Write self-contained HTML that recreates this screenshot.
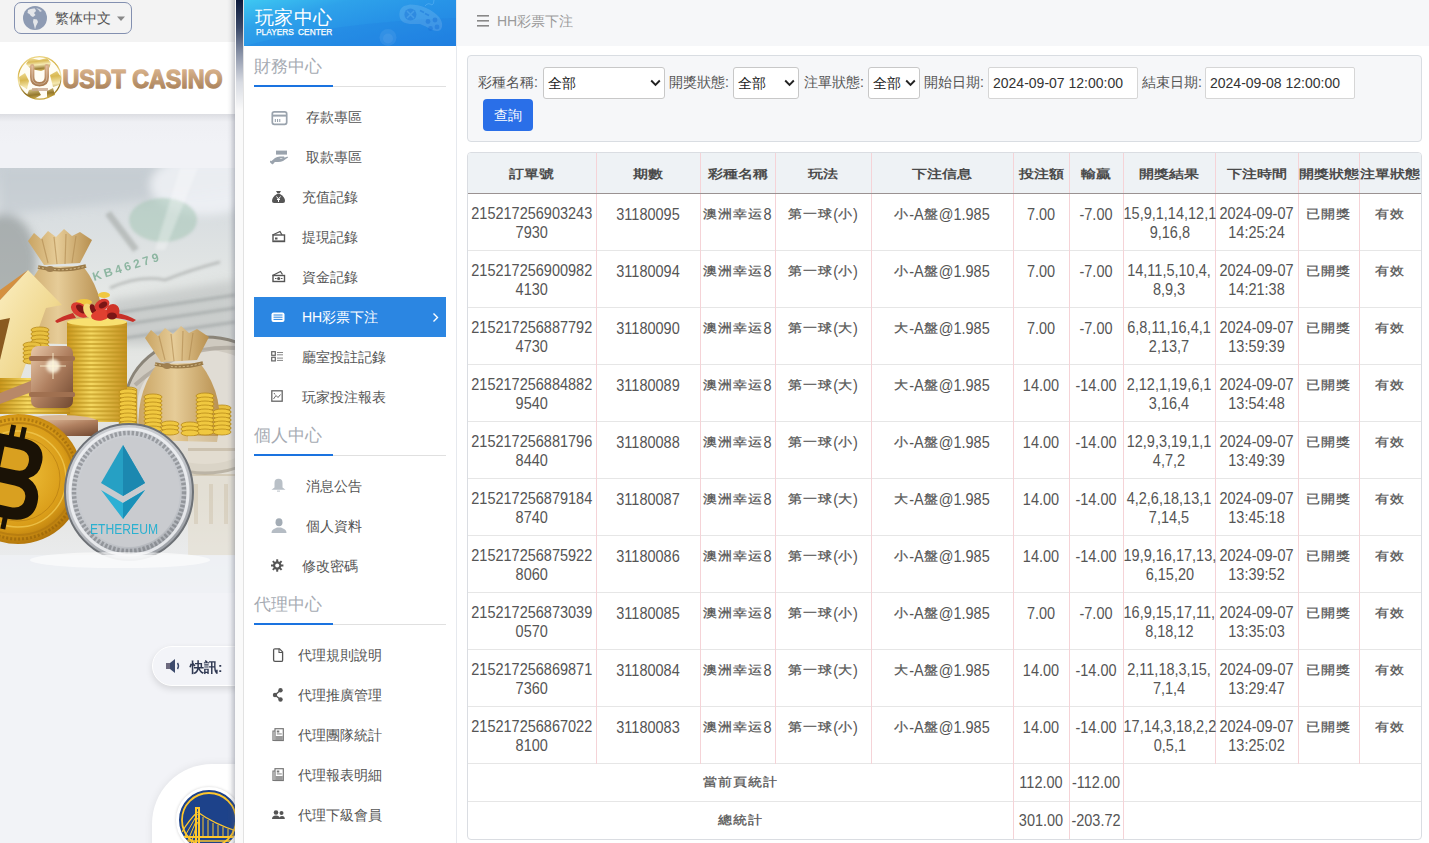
<!DOCTYPE html>
<html><head><meta charset="utf-8">
<style>
*{box-sizing:border-box;margin:0;padding:0}
html,body{width:1429px;height:843px;overflow:hidden;background:#fff;font-family:"Liberation Sans",sans-serif;color:#555}
.abs{position:absolute}
/* left page */
#lp{position:absolute;left:0;top:0;width:235px;height:843px;background:#f2f3f7;overflow:hidden}
#lp .topbar{position:absolute;left:0;top:0;width:235px;height:42px;background:#f3f3f3}
#lang{position:absolute;left:14px;top:2px;width:118px;height:32px;border:1px solid #8390b0;border-radius:7px}
#lp .hdr{position:absolute;left:0;top:42px;width:235px;height:72px;background:#fff}
#lp .gap{position:absolute;left:0;top:114px;width:235px;height:54px;background:linear-gradient(#dcdde2,#eff0f4 8px,#f1f2f6 30px)}
#lp .shadowR{position:absolute;right:0;top:0;width:8px;height:843px;background:linear-gradient(90deg,rgba(90,95,110,0),rgba(90,95,110,.06) 40%,rgba(90,95,110,.33))}
#strip{position:absolute;left:235px;top:0;width:9px;height:843px;background:#fafafa;border-right:1px solid #e2e2e2}
#strip .dk{position:absolute;left:1px;top:0;width:7px;height:110px;background:linear-gradient(#0c1a3c,#3a4868 25%,#8d96aa 50%,#d8dbe2 75%,rgba(250,250,250,0))}
/* sidebar */
#sb{position:absolute;left:244px;top:0;width:213px;height:843px;background:#fff;border-right:1px solid #e6e9ee}
#sbh{position:absolute;left:0;top:0;width:212px;height:46px;background:linear-gradient(165deg,#3ec8f2 0%,#2ea2ea 28%,#2793e7 55%,#1f80e1 100%);overflow:hidden}
#sbh .t1{position:absolute;left:11px;top:5px;font-size:18.5px;color:#fff;letter-spacing:0.3px}
#sbh .t2{position:absolute;left:12px;top:27px;font-size:8.6px;color:#fff;font-weight:normal;-webkit-text-stroke:.25px #fff;letter-spacing:0px;word-spacing:2px;transform:scaleX(.97);transform-origin:0 0;white-space:nowrap}
.sec{position:absolute;left:10px;width:192px;font-size:17px;color:#a6abb3}
.secl{position:absolute;left:10px;width:192px;height:1px;background:#e0e0e0}
.secl i{position:absolute;left:0;top:-1px;width:79px;height:2px;background:#1a73e0}
.it{position:absolute;left:10px;width:192px;height:40px;font-size:14px;color:#555}
.it .ic{position:absolute;left:17px;top:13px;width:16px;height:14px}
.it .tx{position:absolute;left:48px;top:12px;line-height:16px;white-space:nowrap}
.it.act{background:#2b86e2;color:#fff}
/* main */
#main{position:absolute;left:457px;top:0;width:972px;height:843px;background:#fff}
#topb{position:absolute;left:0;top:0;width:972px;height:46px;background:#f6f7f9}
#card{position:absolute;left:10px;top:55px;width:955px;height:87px;background:#f6f7f9;border:1px solid #d9dde2;border-radius:4px}
.lbl{position:absolute;top:18px;font-size:14px;color:#555;white-space:nowrap}
.sel{position:absolute;top:11px;height:32px;background:#fff;border:1px solid #c8c8c8;border-radius:3px;font-size:14px;color:#222}
.sel span{position:absolute;left:4px;top:7px}
.sel svg{position:absolute;top:11px}
.inp{position:absolute;top:11px;height:32px;background:#fff;border:1px solid #d6d6d6;border-radius:2px;font-size:14px;color:#333}
.inp span{position:absolute;left:4px;top:7px}
#btn{position:absolute;left:15px;top:43px;width:50px;height:32px;background:#2a6fe8;border-radius:4px;color:#fff;font-size:14px;text-align:center;line-height:32px}
#tbl{position:absolute;left:10px;top:152px;width:955px;height:688px;border:1px solid #dadde2;border-radius:4px;overflow:hidden}
table{border-collapse:collapse;table-layout:fixed;width:953px;font-size:14.5px;color:#555}
th{height:40px;background:#eef2f5;font-weight:bold;text-align:center;border-bottom:1px solid #9a9292;border-left:1px solid #f5d3d7;padding:0;font-size:14.5px;color:#4a4a4a}
td{height:57px;text-align:center;vertical-align:top;border-left:1px solid #f5d3d7;border-top:1px solid #e6e6e6;padding:11.5px 0 0 0;line-height:19px;white-space:nowrap}
.w{display:inline-block;transform:scaleY(1.1);transform-origin:50% 0;line-height:17px}
.cj{display:inline-block;font-size:14.5px;transform:translateY(-1px) scaleY(.78);-webkit-text-stroke:.3px #555}
th .cj{font-size:14.5px;transform:translateY(1.5px) scaleY(.8);-webkit-text-stroke:0}
th:first-child,td:first-child{border-left:none}
tr.sum td{height:38px;vertical-align:middle;padding:0}

#banner{position:absolute;left:0;top:168px;width:235px;height:425px;background:linear-gradient(#c9ced3,#dfe3e3 30%,#e7e8e4 60%,#eef0f3 90%,#f2f4f8)}
#notice{position:absolute;left:152px;top:646px;width:140px;height:40px;border-radius:20px;background:#f3f4f8;border:1px solid #fff;box-shadow:0 3px 7px rgba(0,0,0,.12)}
#roundw{position:absolute;left:152px;top:764px;width:160px;height:160px;border-radius:60px;background:#fff;box-shadow:0 0 8px rgba(0,0,0,.08)}
#gsw{position:absolute;left:24px;top:23px;width:66px;height:66px;border-radius:50%;background:#1d428a;border:3px solid #fff;box-shadow:0 0 3px rgba(0,0,0,.18);overflow:hidden}
</style></head>
<body>
<div id="lp">
  <div class="topbar"></div>
  <div id="lang"><svg class="abs" width="26" height="26" viewBox="0 0 26 26" style="left:8px;top:2px"><circle cx="12" cy="13" r="12" fill="#8e9bb3"/><path d="M5 5 Q8 3 12 3.5 L13 6 L11 8 L12.5 10 L10 12 L8 11 L6.5 9 L4.5 8 Z" fill="#f3f3f3" opacity=".85"/><path d="M13 3 Q17 3.5 19 6 L17 7 L15.5 5 Z" fill="#f3f3f3" opacity=".7"/><path d="M10.5 14 L14 14.5 L15 17 L13 21 L12 24.5 L11 20 L10 17 Z" fill="#f3f3f3" opacity=".85"/></svg><span class="abs" style="left:40px;top:7px;font-size:14px;color:#555">繁体中文</span><svg class="abs" width="10" height="6" viewBox="0 0 10 6" style="left:101px;top:13px"><path d="M1 0.5 L9 0.5 L5 5 Z" fill="#888"/></svg></div>
  <div class="hdr">
    <svg class="abs" width="46" height="46" viewBox="0 0 46 46" style="left:17px;top:13px">
      <defs><linearGradient id="gb" x1="0.2" y1="0" x2="0.4" y2="1"><stop offset="0" stop-color="#f0dc90"/><stop offset=".3" stop-color="#d4b040"/><stop offset=".55" stop-color="#f4e6a8"/><stop offset=".85" stop-color="#8a6a18"/><stop offset="1" stop-color="#c9a840"/></linearGradient>
      <linearGradient id="gu" x1="0" y1="0" x2="0" y2="1"><stop offset="0" stop-color="#d8ae88"/><stop offset="1" stop-color="#a87c52"/></linearGradient></defs>
      <circle cx="22.6" cy="22.9" r="21.3" fill="#fffdf4" stroke="url(#gb)" stroke-width="1.3"/>
      <path d="M13 3 L22 5 L30 3 L34 8 L32 13 L24 16 L14 14 L9 9 Z" fill="url(#gb)" opacity=".85"/>
      <path d="M2 22 L8 18 L12 26 L10 34 L3 30 Z M33 20 L40 16 L44 22 L42 30 L36 32 Z M12 35 L20 33 L24 40 L17 44 L10 40 Z M30 36 L36 33 L38 40 L30 43 Z" fill="url(#gb)" opacity=".9"/>
      <path d="M15.2 11.2 L15.2 22 Q15.2 29.2 22.5 29.2 Q29.8 29.2 29.8 22 L29.8 11.2" fill="none" stroke="url(#gu)" stroke-width="4.4" stroke-linecap="round"/>
      <path d="M15.2 11.2 L15.2 22 Q15.2 29.2 22.5 29.2 Q29.8 29.2 29.8 22 L29.8 11.2" fill="none" stroke="#f6e8dc" stroke-width=".6" opacity=".7" stroke-linecap="round"/>
      <rect x="15" y="33" width="16" height="3" fill="#c8a890" opacity=".8"/>
    </svg>
    <svg class="abs" width="170" height="34" viewBox="0 0 170 34" style="left:60px;top:21px"><defs><linearGradient id="gt" x1="0" y1="0" x2="0" y2="1"><stop offset="0.1" stop-color="#dcb690"/><stop offset="1" stop-color="#a27a52"/></linearGradient></defs><text x="2.5" y="24.8" font-family="Liberation Sans" font-weight="bold" font-size="25" textLength="160" lengthAdjust="spacingAndGlyphs" fill="url(#gt)" stroke="url(#gt)" stroke-width="1.3" stroke-linejoin="round">USDT CASINO</text></svg>
  </div>
  <div class="gap"></div>
  <div id="banner"><svg class="abs" width="235" height="425" viewBox="0 0 235 425" style="left:0;top:0">
<defs>
<filter id="bl4" x="-50%" y="-50%" width="200%" height="200%"><feGaussianBlur stdDeviation="5"/></filter><filter id="bl2" x="-50%" y="-50%" width="200%" height="200%"><feGaussianBlur stdDeviation="1.8"/></filter><filter id="bl1" x="-50%" y="-50%" width="200%" height="200%"><feGaussianBlur stdDeviation=".6"/></filter>
<linearGradient id="bgk" x1="0" y1="0" x2="0" y2="1"><stop offset="0" stop-color="#cad1d6"/><stop offset=".1" stop-color="#d8dde0"/><stop offset=".3" stop-color="#e5e8e6"/><stop offset=".75" stop-color="#e2e2de"/><stop offset="1" stop-color="#eef0f4"/></linearGradient>
<linearGradient id="bag" x1="0" y1="0" x2="1" y2="0"><stop offset="0" stop-color="#c9a463"/><stop offset=".45" stop-color="#e6cc98"/><stop offset="1" stop-color="#b89050"/></linearGradient>
<linearGradient id="gold" x1="0" y1="0" x2="1" y2="0"><stop offset="0" stop-color="#c9961c"/><stop offset=".4" stop-color="#f5d860"/><stop offset="1" stop-color="#c49020"/></linearGradient>
<linearGradient id="arr" x1="0" y1="0" x2="1" y2="1"><stop offset="0" stop-color="#fbeec0"/><stop offset=".6" stop-color="#f0d890"/><stop offset="1" stop-color="#d4a850"/></linearGradient>
<radialGradient id="btc" cx=".45" cy=".45" r=".6"><stop offset="0" stop-color="#f3c640"/><stop offset=".7" stop-color="#d99c18"/><stop offset="1" stop-color="#a86c08"/></radialGradient>
<radialGradient id="eth" cx=".45" cy=".4" r=".65"><stop offset="0" stop-color="#dcdee2"/><stop offset=".75" stop-color="#c2c5ca"/><stop offset="1" stop-color="#8a8e94"/></radialGradient>
<linearGradient id="bronze" x1="0" y1="0" x2="1" y2="1"><stop offset="0" stop-color="#e8c8a8"/><stop offset=".5" stop-color="#b08060"/><stop offset="1" stop-color="#704830"/></linearGradient>
</defs>
<rect width="235" height="425" fill="url(#bgk)"/>
<g filter="url(#bl4)">
<path d="M0 0 L235 0 L235 22 L0 47 Z" fill="#c3cad0" opacity=".7"/>
<ellipse cx="205" cy="17" rx="55" ry="30" fill="#eef1f5" opacity=".9"/>
<ellipse cx="5" cy="94" rx="32" ry="48" fill="#7f8787" opacity=".55"/>
<path d="M110 132 L235 112 L235 177 L120 177 Z" fill="#b4b8b8" opacity=".55"/>
</g>
<g filter="url(#bl2)">
<ellipse cx="163" cy="52" rx="34" ry="22" fill="#a0c4b2" opacity=".5"/>
<path d="M108 45 L136 82" stroke="#9ea3a0" stroke-width="7" opacity=".55"/>
<path d="M115 145 L235 127 M120 157 L235 140 M125 170 L235 154" stroke="#8f9494" stroke-width="2.5" opacity=".6"/>
<path d="M110 120 Q140 107 165 112 Q190 102 220 94" stroke="#8a8e8c" stroke-width="2" fill="none" opacity=".6"/>
</g>
<g filter="url(#bl1)"><text x="94" y="113" font-size="12" font-weight="bold" fill="#7fae96" opacity=".85" transform="rotate(-17 94 113)" font-family="Liberation Sans" letter-spacing="3">KB46279</text></g>
<path d="M180 0 L198 0 L165 82 L155 82 Z" fill="#fff" opacity=".3" filter="url(#bl2)"/>
<ellipse cx="205" cy="237" rx="80" ry="68" fill="#cfcac0" stroke="#8a8478" stroke-width="3"/>
<ellipse cx="205" cy="239" rx="68" ry="57" fill="#e0dcd4"/>
<path d="M135 217 Q180 177 235 180" stroke="#9c968a" stroke-width="4" fill="none" opacity=".55"/>
<!-- bag 1 -->
<path d="M28.0 73.0 L34.0 65.0 L41.0 71.0 L48.0 63.0 L56.0 69.0 L64.0 61.0 L72.0 68.0 L80.0 64.0 L92.0 72.0 L80.0 95.0 L44.0 97.0 Z" fill="url(#bag)"/>
<path d="M42.0 71.0 L48.0 95.0 M54.0 69.0 L57.0 96.0 M66.0 66.0 L65.0 96.0 M76.0 68.0 L72.0 95.0" stroke="#b08a50" stroke-width="1.2" opacity=".6"/>
<path d="M40.0 99.0 Q16.0 133.0 23.0 175.0 L100.0 177.0 Q110.0 133.0 83.0 98.0 Z" fill="url(#bag)"/>
<path d="M38.0 99.0 Q62.0 105.0 86.0 98.0" stroke="#9a7a48" stroke-width="3.5" fill="none"/>
<path d="M38.0 99.0 Q62.0 105.0 86.0 98.0" stroke="#d8c090" stroke-width="1" stroke-dasharray="2 2" fill="none"/>
<ellipse cx="50.0" cy="101.0" rx="4" ry="3" fill="#a08050"/>
<!-- arrow -->
<path d="M28 102 L62 137 L46 140 L20 212 L0 212 L0 132 Z" fill="url(#arr)"/>
<path d="M28 102 L0 132 L0 122 Z" fill="#d49040"/>
<path d="M0 152 L10 150 L0 192 Z" fill="#8a5a20"/>
<ellipse cx="40" cy="162.0" rx="9" ry="3" fill="#e8c040" stroke="#b88a18" stroke-width=".8"/><ellipse cx="40" cy="166.0" rx="9" ry="3" fill="#e8c040" stroke="#b88a18" stroke-width=".8"/><ellipse cx="40" cy="170.0" rx="9" ry="3" fill="#e8c040" stroke="#b88a18" stroke-width=".8"/><ellipse cx="40" cy="174.0" rx="9" ry="3" fill="#e8c040" stroke="#b88a18" stroke-width=".8"/><ellipse cx="40" cy="178.0" rx="9" ry="3" fill="#e8c040" stroke="#b88a18" stroke-width=".8"/><ellipse cx="40" cy="182.0" rx="9" ry="3" fill="#e8c040" stroke="#b88a18" stroke-width=".8"/><ellipse cx="40" cy="186.0" rx="9" ry="3" fill="#e8c040" stroke="#b88a18" stroke-width=".8"/><ellipse cx="40" cy="190.0" rx="9" ry="3" fill="#e8c040" stroke="#b88a18" stroke-width=".8"/><ellipse cx="32" cy="177.0" rx="9" ry="3" fill="#e8c040" stroke="#b88a18" stroke-width=".8"/><ellipse cx="32" cy="181.0" rx="9" ry="3" fill="#e8c040" stroke="#b88a18" stroke-width=".8"/><ellipse cx="32" cy="185.0" rx="9" ry="3" fill="#e8c040" stroke="#b88a18" stroke-width=".8"/><ellipse cx="32" cy="189.0" rx="9" ry="3" fill="#e8c040" stroke="#b88a18" stroke-width=".8"/><ellipse cx="32" cy="193.0" rx="9" ry="3" fill="#e8c040" stroke="#b88a18" stroke-width=".8"/><ellipse cx="128" cy="222.0" rx="9" ry="3" fill="#e8c040" stroke="#b88a18" stroke-width=".8"/><ellipse cx="128" cy="226.0" rx="9" ry="3" fill="#e8c040" stroke="#b88a18" stroke-width=".8"/><ellipse cx="128" cy="230.0" rx="9" ry="3" fill="#e8c040" stroke="#b88a18" stroke-width=".8"/><ellipse cx="128" cy="234.0" rx="9" ry="3" fill="#e8c040" stroke="#b88a18" stroke-width=".8"/><ellipse cx="128" cy="238.0" rx="9" ry="3" fill="#e8c040" stroke="#b88a18" stroke-width=".8"/><ellipse cx="128" cy="242.0" rx="9" ry="3" fill="#e8c040" stroke="#b88a18" stroke-width=".8"/><ellipse cx="128" cy="246.0" rx="9" ry="3" fill="#e8c040" stroke="#b88a18" stroke-width=".8"/><ellipse cx="128" cy="250.0" rx="9" ry="3" fill="#e8c040" stroke="#b88a18" stroke-width=".8"/><ellipse cx="128" cy="254.0" rx="9" ry="3" fill="#e8c040" stroke="#b88a18" stroke-width=".8"/><ellipse cx="128" cy="258.0" rx="9" ry="3" fill="#e8c040" stroke="#b88a18" stroke-width=".8"/><ellipse cx="150" cy="242.0" rx="9" ry="3" fill="#e8c040" stroke="#b88a18" stroke-width=".8"/><ellipse cx="150" cy="246.0" rx="9" ry="3" fill="#e8c040" stroke="#b88a18" stroke-width=".8"/><ellipse cx="150" cy="250.0" rx="9" ry="3" fill="#e8c040" stroke="#b88a18" stroke-width=".8"/><ellipse cx="150" cy="254.0" rx="9" ry="3" fill="#e8c040" stroke="#b88a18" stroke-width=".8"/><ellipse cx="150" cy="258.0" rx="9" ry="3" fill="#e8c040" stroke="#b88a18" stroke-width=".8"/><ellipse cx="170" cy="230.0" rx="9" ry="3" fill="#e8c040" stroke="#b88a18" stroke-width=".8"/><ellipse cx="170" cy="234.0" rx="9" ry="3" fill="#e8c040" stroke="#b88a18" stroke-width=".8"/><ellipse cx="170" cy="238.0" rx="9" ry="3" fill="#e8c040" stroke="#b88a18" stroke-width=".8"/><ellipse cx="170" cy="242.0" rx="9" ry="3" fill="#e8c040" stroke="#b88a18" stroke-width=".8"/><ellipse cx="170" cy="246.0" rx="9" ry="3" fill="#e8c040" stroke="#b88a18" stroke-width=".8"/><ellipse cx="170" cy="250.0" rx="9" ry="3" fill="#e8c040" stroke="#b88a18" stroke-width=".8"/><ellipse cx="170" cy="254.0" rx="9" ry="3" fill="#e8c040" stroke="#b88a18" stroke-width=".8"/><ellipse cx="170" cy="258.0" rx="9" ry="3" fill="#e8c040" stroke="#b88a18" stroke-width=".8"/><ellipse cx="170" cy="262.0" rx="9" ry="3" fill="#e8c040" stroke="#b88a18" stroke-width=".8"/><ellipse cx="185" cy="247.0" rx="9" ry="3" fill="#e8c040" stroke="#b88a18" stroke-width=".8"/><ellipse cx="185" cy="251.0" rx="9" ry="3" fill="#e8c040" stroke="#b88a18" stroke-width=".8"/><ellipse cx="185" cy="255.0" rx="9" ry="3" fill="#e8c040" stroke="#b88a18" stroke-width=".8"/><ellipse cx="185" cy="259.0" rx="9" ry="3" fill="#e8c040" stroke="#b88a18" stroke-width=".8"/><ellipse cx="185" cy="263.0" rx="9" ry="3" fill="#e8c040" stroke="#b88a18" stroke-width=".8"/><ellipse cx="205" cy="224.0" rx="9" ry="3" fill="#e8c040" stroke="#b88a18" stroke-width=".8"/><ellipse cx="205" cy="228.0" rx="9" ry="3" fill="#e8c040" stroke="#b88a18" stroke-width=".8"/><ellipse cx="205" cy="232.0" rx="9" ry="3" fill="#e8c040" stroke="#b88a18" stroke-width=".8"/><ellipse cx="205" cy="236.0" rx="9" ry="3" fill="#e8c040" stroke="#b88a18" stroke-width=".8"/><ellipse cx="205" cy="240.0" rx="9" ry="3" fill="#e8c040" stroke="#b88a18" stroke-width=".8"/><ellipse cx="205" cy="244.0" rx="9" ry="3" fill="#e8c040" stroke="#b88a18" stroke-width=".8"/><ellipse cx="205" cy="248.0" rx="9" ry="3" fill="#e8c040" stroke="#b88a18" stroke-width=".8"/><ellipse cx="205" cy="252.0" rx="9" ry="3" fill="#e8c040" stroke="#b88a18" stroke-width=".8"/><ellipse cx="205" cy="256.0" rx="9" ry="3" fill="#e8c040" stroke="#b88a18" stroke-width=".8"/><ellipse cx="205" cy="260.0" rx="9" ry="3" fill="#e8c040" stroke="#b88a18" stroke-width=".8"/><ellipse cx="222" cy="240.0" rx="9" ry="3" fill="#e8c040" stroke="#b88a18" stroke-width=".8"/><ellipse cx="222" cy="244.0" rx="9" ry="3" fill="#e8c040" stroke="#b88a18" stroke-width=".8"/><ellipse cx="222" cy="248.0" rx="9" ry="3" fill="#e8c040" stroke="#b88a18" stroke-width=".8"/><ellipse cx="222" cy="252.0" rx="9" ry="3" fill="#e8c040" stroke="#b88a18" stroke-width=".8"/><ellipse cx="222" cy="256.0" rx="9" ry="3" fill="#e8c040" stroke="#b88a18" stroke-width=".8"/><ellipse cx="222" cy="260.0" rx="9" ry="3" fill="#e8c040" stroke="#b88a18" stroke-width=".8"/>
<!-- coin stack -->
<rect x="67" y="154" width="60" height="100" fill="url(#gold)"/>
<rect x="67" y="154.0" width="60" height="2" fill="#b8901c" opacity=".55"/><rect x="67" y="158.2" width="60" height="2" fill="#b8901c" opacity=".55"/><rect x="67" y="162.4" width="60" height="2" fill="#b8901c" opacity=".55"/><rect x="67" y="166.6" width="60" height="2" fill="#b8901c" opacity=".55"/><rect x="67" y="170.8" width="60" height="2" fill="#b8901c" opacity=".55"/><rect x="67" y="175.0" width="60" height="2" fill="#b8901c" opacity=".55"/><rect x="67" y="179.2" width="60" height="2" fill="#b8901c" opacity=".55"/><rect x="67" y="183.4" width="60" height="2" fill="#b8901c" opacity=".55"/><rect x="67" y="187.6" width="60" height="2" fill="#b8901c" opacity=".55"/><rect x="67" y="191.8" width="60" height="2" fill="#b8901c" opacity=".55"/><rect x="67" y="196.0" width="60" height="2" fill="#b8901c" opacity=".55"/><rect x="67" y="200.2" width="60" height="2" fill="#b8901c" opacity=".55"/><rect x="67" y="204.4" width="60" height="2" fill="#b8901c" opacity=".55"/><rect x="67" y="208.6" width="60" height="2" fill="#b8901c" opacity=".55"/><rect x="67" y="212.8" width="60" height="2" fill="#b8901c" opacity=".55"/><rect x="67" y="217.0" width="60" height="2" fill="#b8901c" opacity=".55"/><rect x="67" y="221.2" width="60" height="2" fill="#b8901c" opacity=".55"/><rect x="67" y="225.4" width="60" height="2" fill="#b8901c" opacity=".55"/><rect x="67" y="229.6" width="60" height="2" fill="#b8901c" opacity=".55"/><rect x="67" y="233.8" width="60" height="2" fill="#b8901c" opacity=".55"/><rect x="67" y="238.0" width="60" height="2" fill="#b8901c" opacity=".55"/><rect x="67" y="242.2" width="60" height="2" fill="#b8901c" opacity=".55"/><rect x="67" y="246.4" width="60" height="2" fill="#b8901c" opacity=".55"/><rect x="67" y="250.6" width="60" height="2" fill="#b8901c" opacity=".55"/>
<ellipse cx="97" cy="154" rx="30" ry="4" fill="#f8e070"/>
<!-- bow -->
<ellipse cx="84" cy="134" rx="8" ry="3" fill="#f0c840"/>
<ellipse cx="104" cy="127" rx="6" ry="3" fill="#f0c840"/>
<path d="M55 153 Q62 148 73 145 L76 150 Q66 151 57 155 Z" fill="#c83028"/>
<path d="M117 145 Q128 147 136 152 L133 154 Q126 151 115 150 Z" fill="#c83028"/>
<ellipse cx="80" cy="142" rx="10" ry="6.5" transform="rotate(35 80 142)" fill="#d83a30"/>
<ellipse cx="81" cy="141" rx="6" ry="3.2" transform="rotate(40 81 141)" fill="#7a1616"/>
<ellipse cx="89" cy="143" rx="8" ry="5" transform="rotate(60 89 143)" fill="#f3d878"/>
<ellipse cx="93" cy="141" rx="5" ry="2.8" transform="rotate(70 93 141)" fill="#7a1616"/>
<ellipse cx="102" cy="137" rx="8" ry="5.5" transform="rotate(-30 102 137)" fill="#d83a30"/>
<ellipse cx="103" cy="137" rx="4.5" ry="2.8" transform="rotate(-30 103 137)" fill="#7a1616"/>
<ellipse cx="101" cy="147" rx="10" ry="5.5" transform="rotate(-10 101 147)" fill="#e04030"/>
<ellipse cx="113" cy="143" rx="6.5" ry="7" fill="#d03428"/>
<ellipse cx="112" cy="148" rx="5" ry="3.5" fill="#7a1616"/>
<!-- gavel -->
<rect x="0" y="210" width="70" height="36" fill="url(#gold)"/><rect x="0" y="212.0" width="70" height="1.6" fill="#b08a18" opacity=".5"/><rect x="0" y="216.0" width="70" height="1.6" fill="#b08a18" opacity=".5"/><rect x="0" y="220.0" width="70" height="1.6" fill="#b08a18" opacity=".5"/><rect x="0" y="224.0" width="70" height="1.6" fill="#b08a18" opacity=".5"/><rect x="0" y="228.0" width="70" height="1.6" fill="#b08a18" opacity=".5"/><rect x="0" y="232.0" width="70" height="1.6" fill="#b08a18" opacity=".5"/><rect x="0" y="236.0" width="70" height="1.6" fill="#b08a18" opacity=".5"/><rect x="0" y="240.0" width="70" height="1.6" fill="#b08a18" opacity=".5"/><rect x="0" y="244.0" width="70" height="1.6" fill="#b08a18" opacity=".5"/>
<ellipse cx="60" cy="254" rx="38" ry="7" fill="#d8b898"/>
<rect x="22" y="252" width="76" height="16" fill="url(#bronze)"/>
<path d="M0 225 L38 210 L42 220 L0 236 Z" fill="#b88868"/>
<rect x="31" y="178" width="42" height="62" rx="7" fill="url(#bronze)"/>
<rect x="29" y="188" width="46" height="5" rx="2" fill="#a07050"/>
<rect x="29" y="224" width="46" height="5" rx="2" fill="#a07050"/>
<circle cx="53" cy="198" r="7" fill="#fffbe8" opacity=".85" filter="url(#bl2)"/>
<path d="M40 198 L66 198 M53 185 L53 211" stroke="#fff8d8" stroke-width="1" opacity=".8"/>
<!-- bag 2 -->
<path d="M145.0 170.0 L151.0 162.0 L158.0 168.0 L165.0 160.0 L173.0 166.0 L181.0 158.0 L189.0 165.0 L197.0 161.0 L209.0 169.0 L197.0 192.0 L161.0 194.0 Z" fill="url(#bag)"/>
<path d="M159.0 168.0 L165.0 192.0 M171.0 166.0 L174.0 193.0 M183.0 163.0 L182.0 193.0 M193.0 165.0 L189.0 192.0" stroke="#b08a50" stroke-width="1.2" opacity=".6"/>
<path d="M157.0 196.0 Q133.0 230.0 140.0 272.0 L217.0 274.0 Q227.0 230.0 200.0 195.0 Z" fill="url(#bag)"/>
<path d="M155.0 196.0 Q179.0 202.0 203.0 195.0" stroke="#9a7a48" stroke-width="3.5" fill="none"/>
<path d="M155.0 196.0 Q179.0 202.0 203.0 195.0" stroke="#d8c090" stroke-width="1" stroke-dasharray="2 2" fill="none"/>
<ellipse cx="167.0" cy="198.0" rx="4" ry="3" fill="#a08050"/>
<ellipse cx="128" cy="224.0" rx="9" ry="3" fill="#f0c840" stroke="#b88a18" stroke-width=".8"/><ellipse cx="128" cy="228.0" rx="9" ry="3" fill="#f0c840" stroke="#b88a18" stroke-width=".8"/><ellipse cx="128" cy="232.0" rx="9" ry="3" fill="#f0c840" stroke="#b88a18" stroke-width=".8"/><ellipse cx="128" cy="236.0" rx="9" ry="3" fill="#f0c840" stroke="#b88a18" stroke-width=".8"/><ellipse cx="128" cy="240.0" rx="9" ry="3" fill="#f0c840" stroke="#b88a18" stroke-width=".8"/><ellipse cx="128" cy="244.0" rx="9" ry="3" fill="#f0c840" stroke="#b88a18" stroke-width=".8"/><ellipse cx="128" cy="248.0" rx="9" ry="3" fill="#f0c840" stroke="#b88a18" stroke-width=".8"/><ellipse cx="128" cy="252.0" rx="9" ry="3" fill="#f0c840" stroke="#b88a18" stroke-width=".8"/><ellipse cx="128" cy="256.0" rx="9" ry="3" fill="#f0c840" stroke="#b88a18" stroke-width=".8"/><ellipse cx="128" cy="260.0" rx="9" ry="3" fill="#f0c840" stroke="#b88a18" stroke-width=".8"/><ellipse cx="153" cy="229.0" rx="9" ry="3" fill="#f0c840" stroke="#b88a18" stroke-width=".8"/><ellipse cx="153" cy="233.0" rx="9" ry="3" fill="#f0c840" stroke="#b88a18" stroke-width=".8"/><ellipse cx="153" cy="237.0" rx="9" ry="3" fill="#f0c840" stroke="#b88a18" stroke-width=".8"/><ellipse cx="153" cy="241.0" rx="9" ry="3" fill="#f0c840" stroke="#b88a18" stroke-width=".8"/><ellipse cx="153" cy="245.0" rx="9" ry="3" fill="#f0c840" stroke="#b88a18" stroke-width=".8"/><ellipse cx="153" cy="249.0" rx="9" ry="3" fill="#f0c840" stroke="#b88a18" stroke-width=".8"/><ellipse cx="153" cy="253.0" rx="9" ry="3" fill="#f0c840" stroke="#b88a18" stroke-width=".8"/><ellipse cx="153" cy="257.0" rx="9" ry="3" fill="#f0c840" stroke="#b88a18" stroke-width=".8"/><ellipse cx="153" cy="261.0" rx="9" ry="3" fill="#f0c840" stroke="#b88a18" stroke-width=".8"/><ellipse cx="170" cy="256.0" rx="9" ry="3" fill="#f0c840" stroke="#b88a18" stroke-width=".8"/><ellipse cx="170" cy="260.0" rx="9" ry="3" fill="#f0c840" stroke="#b88a18" stroke-width=".8"/><ellipse cx="170" cy="264.0" rx="9" ry="3" fill="#f0c840" stroke="#b88a18" stroke-width=".8"/><ellipse cx="205" cy="228.0" rx="9" ry="3" fill="#f0c840" stroke="#b88a18" stroke-width=".8"/><ellipse cx="205" cy="232.0" rx="9" ry="3" fill="#f0c840" stroke="#b88a18" stroke-width=".8"/><ellipse cx="205" cy="236.0" rx="9" ry="3" fill="#f0c840" stroke="#b88a18" stroke-width=".8"/><ellipse cx="205" cy="240.0" rx="9" ry="3" fill="#f0c840" stroke="#b88a18" stroke-width=".8"/><ellipse cx="205" cy="244.0" rx="9" ry="3" fill="#f0c840" stroke="#b88a18" stroke-width=".8"/><ellipse cx="205" cy="248.0" rx="9" ry="3" fill="#f0c840" stroke="#b88a18" stroke-width=".8"/><ellipse cx="205" cy="252.0" rx="9" ry="3" fill="#f0c840" stroke="#b88a18" stroke-width=".8"/><ellipse cx="205" cy="256.0" rx="9" ry="3" fill="#f0c840" stroke="#b88a18" stroke-width=".8"/><ellipse cx="205" cy="260.0" rx="9" ry="3" fill="#f0c840" stroke="#b88a18" stroke-width=".8"/><ellipse cx="205" cy="264.0" rx="9" ry="3" fill="#f0c840" stroke="#b88a18" stroke-width=".8"/><ellipse cx="222" cy="244.0" rx="9" ry="3" fill="#f0c840" stroke="#b88a18" stroke-width=".8"/><ellipse cx="222" cy="248.0" rx="9" ry="3" fill="#f0c840" stroke="#b88a18" stroke-width=".8"/><ellipse cx="222" cy="252.0" rx="9" ry="3" fill="#f0c840" stroke="#b88a18" stroke-width=".8"/><ellipse cx="222" cy="256.0" rx="9" ry="3" fill="#f0c840" stroke="#b88a18" stroke-width=".8"/><ellipse cx="222" cy="260.0" rx="9" ry="3" fill="#f0c840" stroke="#b88a18" stroke-width=".8"/><ellipse cx="222" cy="264.0" rx="9" ry="3" fill="#f0c840" stroke="#b88a18" stroke-width=".8"/><ellipse cx="190" cy="257.0" rx="9" ry="3" fill="#f0c840" stroke="#b88a18" stroke-width=".8"/><ellipse cx="190" cy="261.0" rx="9" ry="3" fill="#f0c840" stroke="#b88a18" stroke-width=".8"/><ellipse cx="190" cy="265.0" rx="9" ry="3" fill="#f0c840" stroke="#b88a18" stroke-width=".8"/>
<g opacity=".55"><rect x="188" y="268" width="47" height="120" fill="#e4dccd"/><rect x="188" y="280" width="47" height="3" fill="#bcae92"/><rect x="188" y="306" width="47" height="2" fill="#c8b898"/><rect x="194" y="316" width="4" height="40" fill="#cfc2a6"/><rect x="209" y="316" width="4" height="40" fill="#cfc2a6"/><rect x="224" y="316" width="4" height="40" fill="#cfc2a6"/></g>
<!-- bitcoin -->
<circle cx="18" cy="311" r="65" fill="url(#btc)"/>
<circle cx="18" cy="311" r="56" fill="none" stroke="#b07810" stroke-width="2" opacity=".7"/>
<circle cx="18" cy="311" r="48" fill="none" stroke="#f0c850" stroke-width="1.5" opacity=".8"/><circle cx="18" cy="311" r="60" fill="none" stroke="#8a5a08" stroke-width="3" stroke-dasharray="2 2" opacity=".5"/><circle cx="18" cy="311" r="42" fill="none" stroke="#b07810" stroke-width="1" opacity=".6"/>
<g transform="rotate(12 18 311)"><path d="M-16 270 L14 270 Q38 270 38 290 Q38 304 28 308 Q42 314 42 330 Q42 352 16 352 L-16 352 Z" fill="#1a1206"/>
<path d="M-2 282 L14 282 Q25 282 25 293 Q25 303 14 303 L-2 303 Z M-2 318 L16 318 Q29 318 29 329 Q29 340 16 340 L-2 340 Z" fill="#d9a020"/>
<rect x="0" y="259" width="5" height="13" fill="#1a1206"/><rect x="11" y="259" width="5" height="13" fill="#1a1206"/>
<rect x="0" y="350" width="5" height="13" fill="#1a1206"/><rect x="11" y="350" width="5" height="13" fill="#1a1206"/></g>
<!-- eth -->
<ellipse cx="129" cy="324" rx="64" ry="68" fill="url(#eth)"/>
<ellipse cx="129" cy="324" rx="64" ry="68" fill="none" stroke="#6d7176" stroke-width="2"/>
<ellipse cx="129" cy="324" rx="59" ry="63" fill="none" stroke="#f4f5f7" stroke-width="3" opacity=".8"/><ellipse cx="129" cy="324" rx="55" ry="59" fill="none" stroke="#6f7378" stroke-width="4.5" stroke-dasharray="2.5 1.8" opacity=".55"/>
<ellipse cx="129" cy="324" rx="51" ry="55" fill="#c9cbcf"/>
<path d="M123 277 L145 315 L123 328 L101 315 Z" fill="#26a0c4"/>
<path d="M123 277 L145 315 L123 328 Z" fill="#1c88b0"/>
<path d="M101 322 L123 335 L145 322 L123 351 Z" fill="#2cb0d4"/>
<path d="M123 335 L145 322 L123 351 Z" fill="#1a90b8"/>
<text x="124" y="366" text-anchor="middle" font-size="14" fill="#2ab0d0" font-family="Liberation Sans" textLength="68" lengthAdjust="spacingAndGlyphs">ETHEREUM</text>
<!-- bottom reflection -->
<rect x="0" y="387" width="235" height="40" fill="#eff1f5" opacity=".85"/>
<ellipse cx="120" cy="392" rx="90" ry="8" fill="#fff" opacity=".6"/>
</svg></div>
  <div id="notice"><svg class="abs" width="18" height="16" viewBox="0 0 18 16" style="left:12px;top:11px"><path d="M1 5 L5 5 L10 1 L10 15 L5 11 L1 11 Z" fill="#3c4a6c"/><rect x="1" y="5" width="4" height="6" fill="#6d6a7e"/><path d="M12.5 5 Q14.5 8 12.5 11" fill="none" stroke="#3c4a6c" stroke-width="1.4"/></svg><span class="abs" style="left:37px;top:11.5px;font-size:13.5px;font-weight:bold;color:#2f3852">快訊:</span></div>
  <div id="roundw"><div id="gsw"><svg class="abs" width="60" height="60" viewBox="0 0 60 60" style="left:0;top:0"><circle cx="30" cy="30" r="27" fill="none" stroke="#ffc72c" stroke-width="1.8"/><g stroke="#ffc72c" fill="none"><path d="M17 18 L17 60 M20 18 L20 60" stroke-width="2"/><path d="M16 18 L21 18" stroke-width="2"/><path d="M18.5 22 Q10 30 3 42" stroke-width="1.2"/><path d="M18.5 24 L6 46 M18.5 28 L9 50 M18.5 32 L12 54" stroke-width="1"/><path d="M18.5 22 Q35 34 60 42" stroke-width="1.2"/><path d="M24 27 L24 46 M29 30 L29 46 M34 33 L34 46 M39 35 L39 46 M44 37 L44 46 M49 39 L49 46 M54 40 L54 46" stroke-width="1"/><path d="M2 47 L60 47" stroke-width="2.2"/><path d="M2 51 L60 51" stroke-width="1.5"/></g></svg></div></div>
  <div class="shadowR"></div>
</div>
<div id="strip"><div class="dk"></div></div>
<div id="sb">
  <div id="sbh"><svg class="abs" width="212" height="46" viewBox="0 0 212 46" style="left:0;top:0"><path d="M0 46 Q90 22 212 18 L212 46 Z" fill="#1f7ae0" opacity=".25"/><path d="M166 4.5 C176 4.5 188 9 195 17 C200 23 199 31 193 31 C188 31 184 27 176 24 C170 23.5 164 25 159 22 C154 19 154 9 160 6 Z" fill="#ffffff" opacity=".13"/><circle cx="166.4" cy="14.5" r="6" fill="#1670d8" opacity=".45"/><path d="M163 11 L170 18 M170 11 L163 18" stroke="#5ab0f0" stroke-width="1.5" opacity=".5"/><g fill="#1670d8" opacity=".45"><circle cx="184" cy="21.5" r="2.4"/><circle cx="191" cy="20" r="2.4"/><circle cx="186.5" cy="28.5" r="2.4"/><circle cx="193" cy="27" r="2.4"/></g><path d="M176 10.5 L180 12.5 M181 13.5 L185 15.5" stroke="#1670d8" stroke-width="1.8" opacity=".45"/><path d="M181 6 Q184 2 188 5 Q190 4 190 0" stroke="#8fd0ff" stroke-width="1" fill="none" opacity=".3"/><circle cx="144" cy="37.5" r="8.5" fill="#ffffff" opacity=".07"/><circle cx="144" cy="38.5" r="5" fill="#ffffff" opacity=".06"/></svg><div class="t1">玩家中心</div><div class="t2">PLAYERS CENTER</div></div>
<div class="sec" style="top:55px">財務中心</div><div class="secl" style="top:86px"><i></i></div>
<div class="sec" style="top:424px">個人中心</div><div class="secl" style="top:455px"><i></i></div>
<div class="sec" style="top:593px">代理中心</div><div class="secl" style="top:624px"><i></i></div>
<div class="it " style="top:97px"><svg class="abs" width="18" height="16" viewBox="0 0 18 16" style="left:17px;top:13px"><rect x="1.3" y="1.9" width="14.4" height="12.4" rx="2" fill="none" stroke="#9aa3ad" stroke-width="1.7"/><rect x="1" y="4.6" width="15" height="2" fill="#9aa3ad"/><rect x="3.8" y="9" width="1.1" height="3" fill="#9aa3ad"/><rect x="6" y="9" width="1.1" height="3" fill="#9aa3ad"/><rect x="8.2" y="9" width="1.1" height="3" fill="#9aa3ad"/></svg><span class="tx" style="left:52px">存款專區</span></div>
<div class="it " style="top:137px"><svg class="abs" width="20" height="16" viewBox="0 0 20 16" style="left:16px;top:13px"><rect x="6" y="0.6" width="11" height="4" fill="#9aa3ad"/><path d="M1 11.5 L5 8 Q7 6.5 10 6.5 L14 6.5 Q15 7 14 8 L9.5 8.3 L11 9 L17 6.8 Q18.5 6.6 18 7.6 L13 11 Q11 12 8 12 L5 12 L3 13.8 Z" fill="#9aa3ad"/><rect x="0.6" y="10.5" width="2" height="4" transform="rotate(-45 1.6 12.5)" fill="#9aa3ad"/></svg><span class="tx" style="left:52px">取款專區</span></div>
<div class="it " style="top:177px"><svg class="abs" width="16" height="14" viewBox="0 0 16 14" style="left:17px;top:13px"><path d="M5 1 L10 1 L8.5 3.5 L6.5 3.5 Z" fill="#555"/><path d="M6 4 Q1 7 1 11 Q1 13 3 13 L12 13 Q14 13 14 11 Q14 7 9 4 Z" fill="#555"/><path d="M5.5 6.5 L7.5 9 L9.5 6.5 M7.5 9 L7.5 12 M6 9.5 L9 9.5" stroke="#fff" stroke-width="1" fill="none"/></svg><span class="tx" style="left:48px">充值記錄</span></div>
<div class="it " style="top:217px"><svg class="abs" width="16" height="14" viewBox="0 0 16 14" style="left:17px;top:13px"><path d="M1.5 5 L9 1.5 L11 5" fill="none" stroke="#555" stroke-width="1.3"/><rect x="2" y="5" width="11.5" height="6.5" fill="none" stroke="#555" stroke-width="1.4"/><rect x="4" y="7.5" width="2.5" height="2" fill="#555"/><rect x="3" y="10.5" width="10" height="1.2" fill="#555"/></svg><span class="tx" style="left:48px">提現記錄</span></div>
<div class="it " style="top:257px"><svg class="abs" width="16" height="14" viewBox="0 0 16 14" style="left:17px;top:13px"><path d="M1.5 5.5 L9.5 1.5 L11.5 4.5" fill="none" stroke="#555" stroke-width="1.3"/><rect x="2" y="5.5" width="11.5" height="6" fill="none" stroke="#555" stroke-width="1.4"/><circle cx="7.7" cy="8.5" r="1.6" fill="#555"/><rect x="4" y="8" width="1.5" height="1" fill="#555"/><rect x="10" y="8" width="1.5" height="1" fill="#555"/></svg><span class="tx" style="left:48px">資金記錄</span></div>
<div class="it act" style="top:297px"><svg class="abs" width="16" height="12" viewBox="0 0 16 12" style="left:17px;top:15px"><rect x="0.5" y="0.5" width="13" height="9.5" rx="2" fill="#fff"/><rect x="2.5" y="2.5" width="9" height="1" fill="#2b86e2"/><rect x="2.5" y="4.7" width="9" height="1" fill="#2b86e2"/><rect x="2.5" y="6.9" width="9" height="1" fill="#2b86e2"/></svg><span class="tx" style="left:48px">HH彩票下注</span><svg class="abs" width="8" height="12" viewBox="0 0 8 12" style="left:178px;top:15px"><path d="M1.5 1.5 L5.5 5.5 L1.5 9.5" fill="none" stroke="#fff" stroke-width="1.4"/></svg></div>
<div class="it " style="top:337px"><svg class="abs" width="16" height="14" viewBox="0 0 16 14" style="left:17px;top:14px"><rect x="0.7" y="0.7" width="3.6" height="3.6" fill="none" stroke="#666" stroke-width="1.2"/><rect x="0.7" y="6.3" width="3.6" height="3.6" fill="none" stroke="#666" stroke-width="1.2"/><rect x="6" y="1" width="6" height="1" fill="#888"/><rect x="6" y="3.3" width="6" height="1" fill="#888"/><rect x="6" y="6.6" width="6" height="1" fill="#888"/><rect x="6" y="8.9" width="6" height="1" fill="#888"/></svg><span class="tx" style="left:48px">廳室投註記錄</span></div>
<div class="it " style="top:377px"><svg class="abs" width="16" height="14" viewBox="0 0 16 14" style="left:17px;top:13px"><rect x="0.8" y="0.8" width="10.4" height="10.4" fill="none" stroke="#666" stroke-width="1.3"/><path d="M2.5 9 L5 5.5 L7 7.5 L9.5 4.5" fill="none" stroke="#666" stroke-width="1"/><path d="M3 3 L4 4.5" stroke="#666" stroke-width="1"/></svg><span class="tx" style="left:48px">玩家投注報表</span></div>
<div class="it " style="top:466px"><svg class="abs" width="18" height="16" viewBox="0 0 18 16" style="left:17px;top:12px"><path d="M7.5 0.8 Q11.5 0.8 11.5 5 L11.5 9.5 L14.5 11.7 L0.5 11.7 L3.5 9.5 L3.5 5 Q3.5 0.8 7.5 0.8 Z" fill="#b9c0c7"/><rect x="6" y="12.6" width="3" height="1" fill="#b9c0c7"/></svg><span class="tx" style="left:52px">消息公告</span></div>
<div class="it " style="top:506px"><svg class="abs" width="18" height="16" viewBox="0 0 18 16" style="left:17px;top:12px"><ellipse cx="8" cy="4.3" rx="3.5" ry="4" fill="#a3acb5"/><path d="M0.5 15 Q0.5 11.5 4 10.5 L6 9.5 L10 9.5 L12 10.5 Q15.5 11.5 15.5 15 Z" fill="#b5bcc4"/></svg><span class="tx" style="left:52px">個人資料</span></div>
<div class="it " style="top:546px"><svg class="abs" width="14" height="14" viewBox="0 0 14 14" style="left:17px;top:13px"><g fill="#555"><circle cx="6.2" cy="6.5" r="4.2"/><rect x="5.2" y="0.3" width="2" height="12.4"/><rect x="5.2" y="0.3" width="2" height="12.4" transform="rotate(45 6.2 6.5)"/><rect x="5.2" y="0.3" width="2" height="12.4" transform="rotate(90 6.2 6.5)"/><rect x="5.2" y="0.3" width="2" height="12.4" transform="rotate(135 6.2 6.5)"/></g><circle cx="6.2" cy="6.5" r="2" fill="#fff"/></svg><span class="tx" style="left:48px">修改密碼</span></div>
<div class="it " style="top:635px"><svg class="abs" width="14" height="16" viewBox="0 0 14 16" style="left:18px;top:13px"><path d="M1.6 2.2 Q1.6 0.8 3 0.8 L7.5 0.8 L10.6 3.9 L10.6 12.2 Q10.6 13.4 9.3 13.4 L3 13.4 Q1.6 13.4 1.6 12 Z" fill="none" stroke="#555" stroke-width="1.3"/><path d="M7 0.8 L7 4.5 L10.6 4.5" fill="none" stroke="#555" stroke-width="1.1"/></svg><span class="tx" style="left:43.5px">代理規則說明</span></div>
<div class="it " style="top:675px"><svg class="abs" width="14" height="16" viewBox="0 0 14 16" style="left:18px;top:13px"><g fill="#555"><circle cx="8.5" cy="2.3" r="2.2"/><circle cx="3" cy="7" r="2.2"/><circle cx="8.5" cy="11.5" r="2.2"/></g><path d="M8.5 2.3 L3 7 L8.5 11.5" stroke="#555" stroke-width="1.4" fill="none"/></svg><span class="tx" style="left:43.5px">代理推廣管理</span></div>
<div class="it " style="top:715px"><svg class="abs" width="14" height="16" viewBox="0 0 14 16" style="left:18px;top:13px"><rect x="3" y="0.7" width="8.3" height="11.8" fill="none" stroke="#777" stroke-width="1.2"/><path d="M3 3 L1 3 L1 12.5 L3 12.5" fill="none" stroke="#777" stroke-width="1.2"/><rect x="4.8" y="2.5" width="2.5" height="2" fill="#777"/><rect x="4.8" y="5.5" width="5" height="0.9" fill="#777"/><rect x="3.6" y="8" width="7.2" height="4" fill="#999"/></svg><span class="tx" style="left:43.5px">代理團隊統計</span></div>
<div class="it " style="top:755px"><svg class="abs" width="14" height="16" viewBox="0 0 14 16" style="left:18px;top:13px"><rect x="3" y="0.7" width="8.3" height="11.8" fill="none" stroke="#777" stroke-width="1.2"/><path d="M3 3 L1 3 L1 12.5 L3 12.5" fill="none" stroke="#777" stroke-width="1.2"/><rect x="4.8" y="2.5" width="2.5" height="2" fill="#777"/><rect x="4.8" y="5.5" width="5" height="0.9" fill="#777"/><rect x="3.6" y="8" width="7.2" height="4" fill="#999"/></svg><span class="tx" style="left:43.5px">代理報表明細</span></div>
<div class="it " style="top:795px"><svg class="abs" width="16" height="12" viewBox="0 0 16 12" style="left:18px;top:15px"><g fill="#555"><circle cx="4" cy="2.5" r="2.3"/><path d="M0 9 Q0 5.5 4 5.5 Q8 5.5 8 9 Z"/><circle cx="9.5" cy="3" r="2"/><path d="M7 9 Q7.5 6 10 6 Q12.8 6 12.8 9 Z"/></g></svg><span class="tx" style="left:43.5px">代理下級會員</span></div>
</div>
<div id="main">
  <div id="topb"><svg class="abs" width="14" height="14" viewBox="0 0 14 14" style="left:20px;top:14px"><rect x="0" y="1" width="12" height="1.6" fill="#888"/><rect x="0" y="6" width="12" height="1.6" fill="#888"/><rect x="0" y="11" width="12" height="1.6" fill="#888"/></svg><span class="abs" style="left:40px;top:13px;font-size:14px;color:#9a9a9a">HH彩票下注</span></div>
  <div id="card"><span class="lbl" style="left:10px">彩種名稱:</span><div class="sel" style="left:75px;width:122px"><span>全部</span><svg width="11" height="8" viewBox="0 0 11 8" style="left:106px"><path d="M1.2 1.5 L5.5 5.8 L9.8 1.5" fill="none" stroke="#222" stroke-width="1.9"/></svg></div><span class="lbl" style="left:201px">開獎狀態:</span><div class="sel" style="left:265px;width:66px"><span>全部</span><svg width="11" height="8" viewBox="0 0 11 8" style="left:50px"><path d="M1.2 1.5 L5.5 5.8 L9.8 1.5" fill="none" stroke="#222" stroke-width="1.9"/></svg></div><span class="lbl" style="left:336px">注單狀態:</span><div class="sel" style="left:400px;width:52px"><span>全部</span><svg width="11" height="8" viewBox="0 0 11 8" style="left:36px"><path d="M1.2 1.5 L5.5 5.8 L9.8 1.5" fill="none" stroke="#222" stroke-width="1.9"/></svg></div><span class="lbl" style="left:456px">開始日期:</span><div class="inp" style="left:520px;width:150px"><span>2024-09-07 12:00:00</span></div><span class="lbl" style="left:674px">結束日期:</span><div class="inp" style="left:737px;width:150px"><span>2024-09-08 12:00:00</span></div><div id="btn">查詢</div></div>
  <div id="tbl"><table><colgroup><col style="width:128px"><col style="width:104px"><col style="width:75px"><col style="width:96px"><col style="width:142px"><col style="width:56px"><col style="width:54px"><col style="width:92px"><col style="width:83px"><col style="width:61px"><col style="width:62px"></colgroup><tr><th><span class="cj">訂單號</span></th><th><span class="cj">期數</span></th><th><span class="cj">彩種名稱</span></th><th><span class="cj">玩法</span></th><th><span class="cj">下注信息</span></th><th><span class="cj">投注額</span></th><th><span class="cj">輸贏</span></th><th><span class="cj">開獎結果</span></th><th><span class="cj">下注時間</span></th><th><span class="cj">開獎狀態</span></th><th><span class="cj">注單狀態</span></th></tr><tr><td><span class="w">215217256903243<br>7930</span></td><td><span class="w">31180095</span></td><td><span class="w"><span class="cj">澳洲幸运</span>8</span></td><td><span class="w"><span class="cj">第一球</span>(<span class="cj">小</span>)</span></td><td><span class="w"><span class="cj">小</span>-A<span class="cj">盤</span>@1.985</span></td><td><span class="w">7.00</span></td><td><span class="w">-7.00</span></td><td><span class="w">15,9,1,14,12,1<br>9,16,8</span></td><td><span class="w">2024-09-07<br>14:25:24</span></td><td><span class="w"><span class="cj">已開獎</span></span></td><td><span class="w"><span class="cj">有效</span></span></td></tr><tr><td><span class="w">215217256900982<br>4130</span></td><td><span class="w">31180094</span></td><td><span class="w"><span class="cj">澳洲幸运</span>8</span></td><td><span class="w"><span class="cj">第一球</span>(<span class="cj">小</span>)</span></td><td><span class="w"><span class="cj">小</span>-A<span class="cj">盤</span>@1.985</span></td><td><span class="w">7.00</span></td><td><span class="w">-7.00</span></td><td><span class="w">14,11,5,10,4,<br>8,9,3</span></td><td><span class="w">2024-09-07<br>14:21:38</span></td><td><span class="w"><span class="cj">已開獎</span></span></td><td><span class="w"><span class="cj">有效</span></span></td></tr><tr><td><span class="w">215217256887792<br>4730</span></td><td><span class="w">31180090</span></td><td><span class="w"><span class="cj">澳洲幸运</span>8</span></td><td><span class="w"><span class="cj">第一球</span>(<span class="cj">大</span>)</span></td><td><span class="w"><span class="cj">大</span>-A<span class="cj">盤</span>@1.985</span></td><td><span class="w">7.00</span></td><td><span class="w">-7.00</span></td><td><span class="w">6,8,11,16,4,1<br>2,13,7</span></td><td><span class="w">2024-09-07<br>13:59:39</span></td><td><span class="w"><span class="cj">已開獎</span></span></td><td><span class="w"><span class="cj">有效</span></span></td></tr><tr><td><span class="w">215217256884882<br>9540</span></td><td><span class="w">31180089</span></td><td><span class="w"><span class="cj">澳洲幸运</span>8</span></td><td><span class="w"><span class="cj">第一球</span>(<span class="cj">大</span>)</span></td><td><span class="w"><span class="cj">大</span>-A<span class="cj">盤</span>@1.985</span></td><td><span class="w">14.00</span></td><td><span class="w">-14.00</span></td><td><span class="w">2,12,1,19,6,1<br>3,16,4</span></td><td><span class="w">2024-09-07<br>13:54:48</span></td><td><span class="w"><span class="cj">已開獎</span></span></td><td><span class="w"><span class="cj">有效</span></span></td></tr><tr><td><span class="w">215217256881796<br>8440</span></td><td><span class="w">31180088</span></td><td><span class="w"><span class="cj">澳洲幸运</span>8</span></td><td><span class="w"><span class="cj">第一球</span>(<span class="cj">小</span>)</span></td><td><span class="w"><span class="cj">小</span>-A<span class="cj">盤</span>@1.985</span></td><td><span class="w">14.00</span></td><td><span class="w">-14.00</span></td><td><span class="w">12,9,3,19,1,1<br>4,7,2</span></td><td><span class="w">2024-09-07<br>13:49:39</span></td><td><span class="w"><span class="cj">已開獎</span></span></td><td><span class="w"><span class="cj">有效</span></span></td></tr><tr><td><span class="w">215217256879184<br>8740</span></td><td><span class="w">31180087</span></td><td><span class="w"><span class="cj">澳洲幸运</span>8</span></td><td><span class="w"><span class="cj">第一球</span>(<span class="cj">大</span>)</span></td><td><span class="w"><span class="cj">大</span>-A<span class="cj">盤</span>@1.985</span></td><td><span class="w">14.00</span></td><td><span class="w">-14.00</span></td><td><span class="w">4,2,6,18,13,1<br>7,14,5</span></td><td><span class="w">2024-09-07<br>13:45:18</span></td><td><span class="w"><span class="cj">已開獎</span></span></td><td><span class="w"><span class="cj">有效</span></span></td></tr><tr><td><span class="w">215217256875922<br>8060</span></td><td><span class="w">31180086</span></td><td><span class="w"><span class="cj">澳洲幸运</span>8</span></td><td><span class="w"><span class="cj">第一球</span>(<span class="cj">小</span>)</span></td><td><span class="w"><span class="cj">小</span>-A<span class="cj">盤</span>@1.985</span></td><td><span class="w">14.00</span></td><td><span class="w">-14.00</span></td><td><span class="w">19,9,16,17,13,<br>6,15,20</span></td><td><span class="w">2024-09-07<br>13:39:52</span></td><td><span class="w"><span class="cj">已開獎</span></span></td><td><span class="w"><span class="cj">有效</span></span></td></tr><tr><td><span class="w">215217256873039<br>0570</span></td><td><span class="w">31180085</span></td><td><span class="w"><span class="cj">澳洲幸运</span>8</span></td><td><span class="w"><span class="cj">第一球</span>(<span class="cj">小</span>)</span></td><td><span class="w"><span class="cj">小</span>-A<span class="cj">盤</span>@1.985</span></td><td><span class="w">7.00</span></td><td><span class="w">-7.00</span></td><td><span class="w">16,9,15,17,11,<br>8,18,12</span></td><td><span class="w">2024-09-07<br>13:35:03</span></td><td><span class="w"><span class="cj">已開獎</span></span></td><td><span class="w"><span class="cj">有效</span></span></td></tr><tr><td><span class="w">215217256869871<br>7360</span></td><td><span class="w">31180084</span></td><td><span class="w"><span class="cj">澳洲幸运</span>8</span></td><td><span class="w"><span class="cj">第一球</span>(<span class="cj">大</span>)</span></td><td><span class="w"><span class="cj">大</span>-A<span class="cj">盤</span>@1.985</span></td><td><span class="w">14.00</span></td><td><span class="w">-14.00</span></td><td><span class="w">2,11,18,3,15,<br>7,1,4</span></td><td><span class="w">2024-09-07<br>13:29:47</span></td><td><span class="w"><span class="cj">已開獎</span></span></td><td><span class="w"><span class="cj">有效</span></span></td></tr><tr><td><span class="w">215217256867022<br>8100</span></td><td><span class="w">31180083</span></td><td><span class="w"><span class="cj">澳洲幸运</span>8</span></td><td><span class="w"><span class="cj">第一球</span>(<span class="cj">小</span>)</span></td><td><span class="w"><span class="cj">小</span>-A<span class="cj">盤</span>@1.985</span></td><td><span class="w">14.00</span></td><td><span class="w">-14.00</span></td><td><span class="w">17,14,3,18,2,2<br>0,5,1</span></td><td><span class="w">2024-09-07<br>13:25:02</span></td><td><span class="w"><span class="cj">已開獎</span></span></td><td><span class="w"><span class="cj">有效</span></span></td></tr><tr class="sum"><td colspan="5" style="border-left:none"><span class="w"><span class="cj">當前頁統計</span></span></td><td><span class="w">112.00</span></td><td><span class="w">-112.00</span></td><td colspan="4"></td></tr><tr class="sum"><td colspan="5" style="border-left:none"><span class="w"><span class="cj">總統計</span></span></td><td><span class="w">301.00</span></td><td><span class="w">-203.72</span></td><td colspan="4"></td></tr></table></div>
</div>
</body></html>
